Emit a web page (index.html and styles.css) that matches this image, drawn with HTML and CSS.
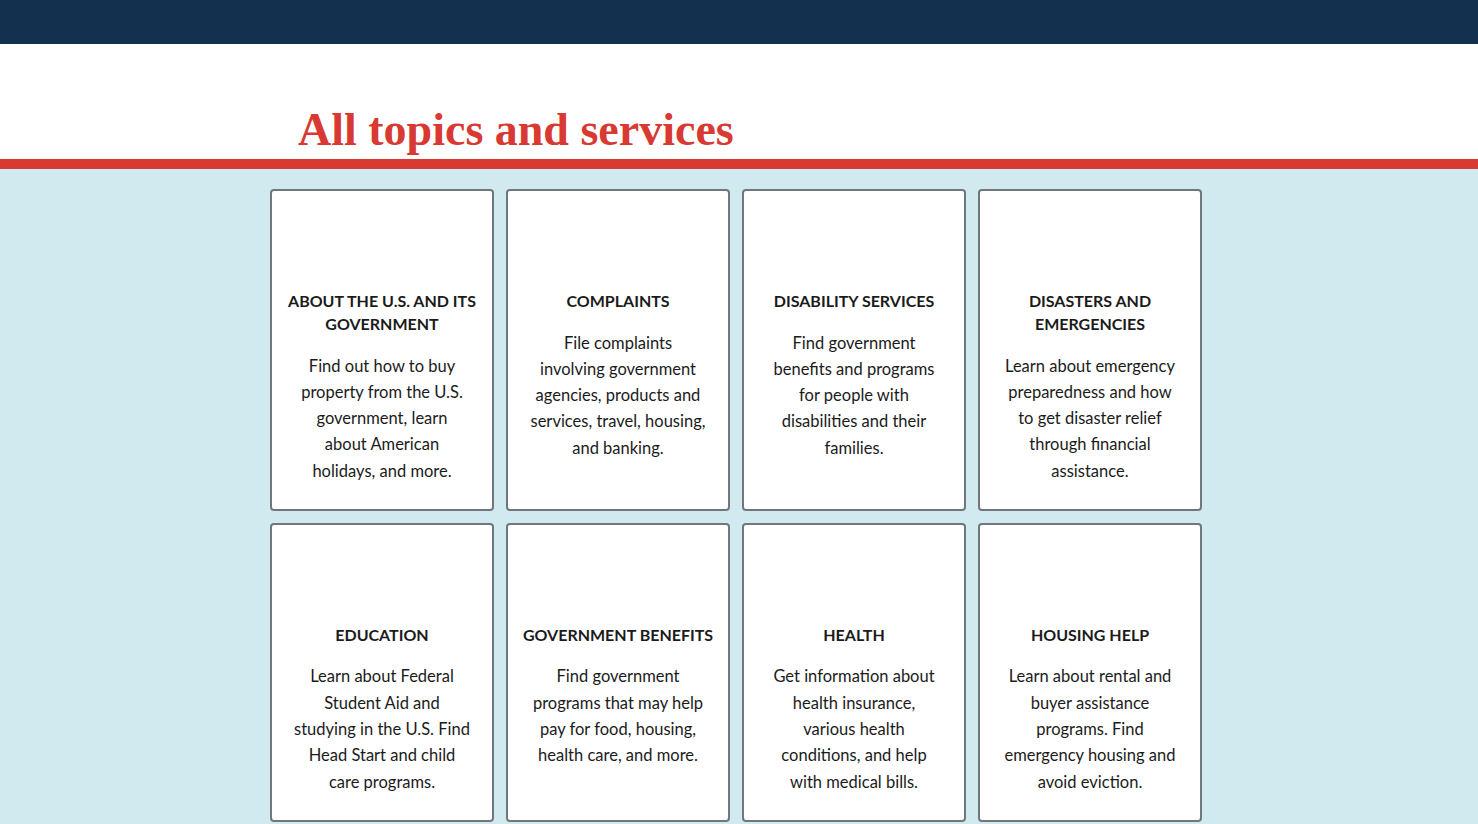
FILE: index.html
```html
<!DOCTYPE html>
<html lang="en">
<head>
<meta charset="utf-8">
<title>All topics and services</title>
<link rel="stylesheet" href="styles.css">
</head>
<body>
<header class="topbar"></header>
<section class="hero">
  <div class="container">
    <h1 class="hero-title">All topics and services</h1>
  </div>
</section>
<main class="topics">
  <div class="container">
    <ul class="card-grid">
      <li class="card">
        <h2 class="card-title">About the U.S. and its<br>government</h2>
        <p class="card-text">Find out how to buy<br>property from the U.S.<br>government, learn<br>about American<br>holidays, and more.</p>
      </li>
      <li class="card">
        <h2 class="card-title">Complaints</h2>
        <p class="card-text">File complaints<br>involving government<br>agencies, products and<br>services, travel, housing,<br>and banking.</p>
      </li>
      <li class="card">
        <h2 class="card-title">Disability services</h2>
        <p class="card-text">Find government<br>benefits and programs<br>for people with<br>disabilities and their<br>families.</p>
      </li>
      <li class="card">
        <h2 class="card-title">Disasters and<br>emergencies</h2>
        <p class="card-text">Learn about emergency<br>preparedness and how<br>to get disaster relief<br>through financial<br>assistance.</p>
      </li>
      <li class="card">
        <h2 class="card-title">Education</h2>
        <p class="card-text">Learn about Federal<br>Student Aid and<br>studying in the U.S. Find<br>Head Start and child<br>care programs.</p>
      </li>
      <li class="card">
        <h2 class="card-title">Government benefits</h2>
        <p class="card-text">Find government<br>programs that may help<br>pay for food, housing,<br>health care, and more.</p>
      </li>
      <li class="card">
        <h2 class="card-title">Health</h2>
        <p class="card-text">Get information about<br>health insurance,<br>various health<br>conditions, and help<br>with medical bills.</p>
      </li>
      <li class="card">
        <h2 class="card-title">Housing help</h2>
        <p class="card-text">Learn about rental and<br>buyer assistance<br>programs. Find<br>emergency housing and<br>avoid eviction.</p>
      </li>
    </ul>
  </div>
</main>
</body>
</html>
```

FILE: styles.css
```css
* { box-sizing: border-box; }

html, body {
  margin: 0;
  padding: 0;
}

body {
  font-family: Lato, "Liberation Sans", sans-serif;
  color: #1b1b1b;
  background: #d1eaf0;
}

.topbar {
  height: 44px;
  background: #14304f;
}

.container {
  width: 938px;
  margin: 0 auto;
}

.hero {
  background: #ffffff;
  border-bottom: 10px solid #d83933;
  padding: 63px 0 6px;
}

.hero-title {
  margin: 0 0 0 28px;
  font-family: "Liberation Serif", "DejaVu Serif", serif;
  font-weight: 700;
  font-size: 46px;
  line-height: 1;
  color: #d83933;
  letter-spacing: 0;
}

.topics {
  padding: 20px 0 4px;
}

.card-grid {
  list-style: none;
  margin: 0;
  padding: 0;
  display: grid;
  grid-template-columns: repeat(4, 224px);
  gap: 12px;
}

.card {
  background: #ffffff;
  border: 2px solid #71767a;
  border-radius: 4px;
  padding: 98px 10px 25px;
  text-align: center;
}

.card-title {
  margin: 0;
  font-size: 16px;
  font-weight: 700;
  line-height: 23px;
  text-transform: uppercase;
  white-space: nowrap;
}

.card-text {
  margin: 17.5px 0 0;
  font-size: 16.5px;
  line-height: 26.3px;
  white-space: nowrap;
}
```
